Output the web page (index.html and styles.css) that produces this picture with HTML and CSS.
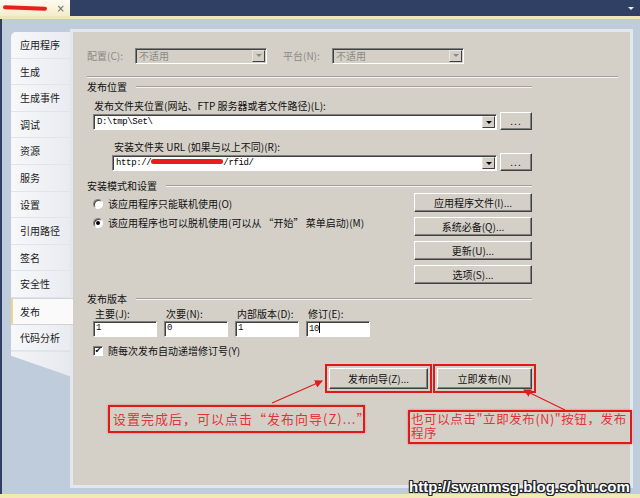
FILE: index.html
```html
<!DOCTYPE html>
<html lang="zh-CN">
<head>
    <meta charset="UTF-8">
    <title>发布</title>
    <link rel="stylesheet" href="styles.css">
</head>
<body>
    <div class="topbar">
        <div class="doctab">
            <span class="doctab-name"></span>
            <span class="doctab-close">×</span>
        </div>
        <span class="topbar-menu"></span>
    </div>
    <div class="goldline"></div>

    <div class="workspace">
        <div class="sidebar">
            <div class="side-tab first">应用程序</div>
            <div class="side-tab">生成</div>
            <div class="side-tab">生成事件</div>
            <div class="side-tab">调试</div>
            <div class="side-tab">资源</div>
            <div class="side-tab">服务</div>
            <div class="side-tab">设置</div>
            <div class="side-tab">引用路径</div>
            <div class="side-tab">签名</div>
            <div class="side-tab">安全性</div>
            <div class="side-tab active">发布</div>
            <div class="side-tab">代码分析</div>
            <div class="side-tail"></div>
        </div>

        <div class="frame">
            <div class="panel">
                <div class="cfg-row">
                    <span class="cfg-label">配置(C):</span>
                    <div class="combo combo-off cfg-combo">
                        <span class="combo-text">不适用</span>
                        <span class="combo-btn"><i class="arrow"></i></span>
                    </div>
                    <span class="cfg-label cfg-label-2">平台(N):</span>
                    <div class="combo combo-off cfg-combo">
                        <span class="combo-text">不适用</span>
                        <span class="combo-btn"><i class="arrow"></i></span>
                    </div>
                </div>
                <div class="rule rule-wide"></div>

                <div class="pub-body">
                    <div class="group-head">发布位置<i class="rule"></i></div>

                    <div class="field-label">发布文件夹位置(网站、FTP 服务器或者文件路径)(L):</div>
                    <div class="path-row">
                        <div class="combo path-combo">
                            <span class="combo-text mono">D:\tmp\Set\</span>
                            <span class="combo-btn"><i class="arrow"></i></span>
                        </div>
                        <button class="btn btn-browse">...</button>
                    </div>

                    <div class="field-label indent">安装文件夹 URL (如果与以上不同)(R):</div>
                    <div class="path-row indent-row">
                        <div class="combo path-combo">
                            <span class="combo-text mono">http://<span class="redact"></span>/rfid/</span>
                            <span class="combo-btn"><i class="arrow"></i></span>
                        </div>
                        <button class="btn btn-browse">...</button>
                    </div>

                    <div class="group-head group-gap">安装模式和设置<i class="rule"></i></div>
                    <div class="mode-row">
                        <div class="mode-options">
                            <div class="option"><span class="radio"></span>该应用程序只能联机使用(O)</div>
                            <div class="option option-2"><span class="radio radio-on"></span>该应用程序也可以脱机使用(可以从 “开始” 菜单启动)(M)</div>
                        </div>
                        <div class="mode-buttons">
                            <button class="btn btn-side">应用程序文件(I)...</button>
                            <button class="btn btn-side">系统必备(Q)...</button>
                            <button class="btn btn-side">更新(U)...</button>
                            <button class="btn btn-side">选项(S)...</button>
                        </div>
                    </div>

                    <div class="group-head group-gap">发布版本<i class="rule"></i></div>
                    <div class="version-row">
                        <div class="version-field">
                            <div class="version-label">主要(J):</div>
                            <div class="textbox">1</div>
                        </div>
                        <div class="version-field">
                            <div class="version-label">次要(N):</div>
                            <div class="textbox">0</div>
                        </div>
                        <div class="version-field">
                            <div class="version-label">内部版本(D):</div>
                            <div class="textbox">1</div>
                        </div>
                        <div class="version-field">
                            <div class="version-label">修订(E):</div>
                            <div class="textbox">10<span class="caret"></span></div>
                        </div>
                    </div>
                    <div class="option check-option"><span class="checkbox">✔</span>随每次发布自动递增修订号(Y)</div>

                    <div class="publish-row">
                        <button class="btn btn-publish btn-wizard marked">发布向导(Z)...</button>
                        <button class="btn btn-publish btn-now marked">立即发布(N)</button>
                    </div>
                </div>
            </div>
        </div>
    </div>
    <div class="bottomline"></div>

    <!-- annotations drawn over the screenshot -->
    <svg class="arrows" width="640" height="498" viewBox="0 0 640 498">
        <defs>
            <marker id="head" markerWidth="8" markerHeight="8" refX="7" refY="4" orient="auto" markerUnits="userSpaceOnUse">
                <path d="M0,0 L8,4 L0,8 Z" fill="#e01c1c"/>
            </marker>
        </defs>
        <line x1="272" y1="403" x2="322" y2="381" stroke="#e01c1c" stroke-width="1.2" marker-end="url(#head)"/>
        <line x1="565" y1="410" x2="524" y2="390" stroke="#e01c1c" stroke-width="1.2" marker-end="url(#head)"/>
    </svg>
    <div class="note note-1">设置完成后，可以点击“发布向导(Z)...”</div>
    <div class="note note-2">也可以点击"立即发布(N)"按钮，发布<br>程序</div>
    <div class="watermark">http://swanmsg.blog.sohu.com</div>
</body>
</html>
```

FILE: styles.css
```css
* {
    box-sizing: border-box;
}
body {
    margin: 0;
    width: 640px;
    height: 498px;
    overflow: hidden;
    position: relative;
    background-color: #bfccdc;
    font-family: "Noto Sans CJK SC", "Liberation Sans", sans-serif;
    font-size: 10px;
    color: #111;
}
.topbar {
    height: 16px;
    background-color: #2f4064;
    display: flex;
    justify-content: space-between;
    align-items: center;
}
.doctab {
    width: 70px;
    height: 16px;
    background: linear-gradient(#fdfbf1, #f4ecca);
    display: flex;
    align-items: center;
    padding: 0 5px 0 3px;
    justify-content: space-between;
}
.doctab-name {
    width: 44px;
    height: 4px;
    border-radius: 3px;
    background-color: #e8201c;
    transform: rotate(2deg);
}
.doctab-close {
    font-family: "DejaVu Sans", sans-serif;
    font-size: 10px;
    color: #666;
}
.topbar-menu {
    margin-right: 6px;
    border-left: 3px solid transparent;
    border-right: 3px solid transparent;
    border-top: 3px solid #e8ecf4;
}
.goldline {
    height: 3px;
    background-color: #efe5bb;
}
.workspace {
    height: 475px;
    display: flex;
    align-items: flex-start;
    padding: 10px 7px 6px 9px;
    border-left: 2px solid #2f4064;
}

/* left tabs */
.sidebar {
    width: 59px;
    margin-top: 3px;
    display: flex;
    flex-direction: column;
}
.side-tab {
    height: 26.6px;
    line-height: 26px;
    padding-left: 9px;
    background: linear-gradient(to right, #f7f8fa, #e8ebf0);
    border-bottom: 1px solid #e1e4ea;
    color: #1b1b1b;
    font-size: 10px;
}
.side-tab.first {
    border-top-left-radius: 5px;
}
.side-tab.active {
    background: #fafafa;
    border-left: 2px solid #efd58c;
    border-top: 1px solid #cfd4dc;
    border-bottom: 1px solid #cfd4dc;
    padding-left: 7px;
    margin-right: -3px;
    position: relative;
    z-index: 1;
}
.side-tail {
    height: 25px;
    background: linear-gradient(to right, #f2f4f7, #e6e9ee);
    clip-path: polygon(0 0, 100% 0, 100% 100%, 0 18%);
}

/* property page */
.frame {
    flex: 1;
    height: 459px;
    border: 3px solid #e3e8ef;
}
.panel {
    height: 100%;
    background-color: #d4d0c8;
    padding: 16px 12px 0 14px;
}
.cfg-row {
    height: 15px;
    display: flex;
    align-items: center;
}
.cfg-label {
    width: 48px;
    color: #8c8983;
    white-space: nowrap;
}
.cfg-label-2 {
    width: 49px;
    margin-left: 16px;
}
.cfg-combo {
    width: 132px;
    height: 16px;
    padding: 1px;
}
.rule {
    display: block;
    border-top: 1px solid #a3a098;
    border-bottom: 1px solid #f4f3ef;
}
.rule-wide {
    margin-top: 13px;
}
.pub-body {
    width: 445px;
}
.group-head {
    margin-top: 3px;
    height: 12px;
    line-height: 12px;
    display: flex;
    align-items: center;
    white-space: nowrap;
}
.group-head .rule {
    flex: 1;
    margin-left: 9px;
}
.group-gap {
    margin-top: 9px;
}

/* classic controls */
.combo {
    display: flex;
    height: 16px;
    background-color: #fff;
    border: 1px solid;
    border-color: #808080 #fff #fff #808080;
    box-shadow: inset 1px 1px #404040;
    padding: 1px 1px 1px 2px;
}
.combo-off {
    background-color: #d4d0c8;
    color: #8c8983;
}
.combo-text {
    flex: 1;
    line-height: 12px;
    padding-left: 1px;
    white-space: nowrap;
}
.mono {
    font-family: "Liberation Mono", monospace;
    font-size: 9px;
    letter-spacing: -0.35px;
    color: #000;
}
.redact {
    display: inline-block;
    width: 72px;
    height: 5px;
    border-radius: 3px;
    background-color: #ea1d1d;
    vertical-align: 1px;
}
.combo-btn {
    width: 13px;
    background-color: #d4d0c8;
    border: 1px solid;
    border-color: #e8e6e0 #404040 #404040 #e8e6e0;
    display: flex;
    align-items: center;
    justify-content: center;
}
.arrow {
    border-left: 3px solid transparent;
    border-right: 3px solid transparent;
    border-top: 3px solid #000;
}
.combo-off .arrow {
    border-top-color: #8c8983;
}
.btn {
    font-family: "Noto Sans CJK SC", sans-serif;
    font-size: 10px;
    color: #111;
    background-color: #d4d0c8;
    border: 1px solid;
    border-color: #fff #404040 #404040 #fff;
    box-shadow: inset -1px -1px #808080;
    padding: 0;
    line-height: 12px;
}
.field-label {
    margin-top: 7px;
    height: 12px;
    line-height: 12px;
    padding-left: 7px;
    white-space: nowrap;
}
.field-label.indent {
    margin-top: 11px;
    padding-left: 27px;
}
.path-row {
    display: flex;
    align-items: flex-end;
    padding-left: 6px;
}
.path-row.indent-row {
    padding-left: 25px;
}
.path-combo {
    flex: 1;
}
.btn-browse {
    width: 32px;
    height: 18px;
    margin-left: 3px;
    letter-spacing: 1px;
}

.mode-row {
    margin-top: 1px;
    display: flex;
    justify-content: space-between;
}
.mode-options {
    padding-left: 6px;
}
.option {
    height: 12px;
    line-height: 12px;
    display: flex;
    align-items: center;
    white-space: nowrap;
    margin-top: 5px;
}
.option-2 {
    margin-top: 7px;
}
.radio {
    width: 10px;
    height: 10px;
    margin-right: 5px;
    border-radius: 50%;
    background-color: #fff;
    border: 1px solid;
    border-color: #808080 #fff #fff #808080;
    box-shadow: inset 1px 1px #404040;
    display: flex;
    align-items: center;
    justify-content: center;
}
.radio-on::after {
    content: "";
    width: 4px;
    height: 4px;
    border-radius: 50%;
    background-color: #000;
}
.mode-buttons {
    width: 118px;
    display: flex;
    flex-direction: column;
    gap: 5px;
}
.btn-side {
    height: 19px;
}

.version-row {
    margin-top: 3px;
    padding-left: 6px;
    display: flex;
    gap: 7px;
}
.version-field {
    width: 64px;
}
.version-label {
    height: 12px;
    line-height: 12px;
    padding-left: 2px;
    white-space: nowrap;
}
.textbox {
    margin-top: 1px;
    height: 16px;
    background-color: #fff;
    border: 1px solid;
    border-color: #808080 #fff #fff #808080;
    box-shadow: inset 1px 1px #404040;
    padding-left: 2px;
    line-height: 13px;
    font-family: "Liberation Mono", monospace;
    font-size: 9px;
    letter-spacing: -0.35px;
}
.caret {
    display: inline-block;
    width: 1px;
    height: 11px;
    background-color: #000;
    vertical-align: -2px;
}
.check-option {
    margin-top: 8px;
    padding-left: 6px;
}
.checkbox {
    width: 10px;
    height: 10px;
    margin-right: 5px;
    background-color: #fff;
    border: 1px solid;
    border-color: #808080 #fff #fff #808080;
    box-shadow: inset 1px 1px #404040;
    font-family: "DejaVu Sans", sans-serif;
    font-size: 8px;
    line-height: 8px;
    text-align: center;
    color: #000;
}
.publish-row {
    margin-top: 11px;
    display: flex;
    justify-content: flex-end;
    gap: 9px;
}
.btn-publish {
    height: 21px;
}
.btn-wizard {
    width: 99px;
}
.btn-now {
    width: 95px;
}
.marked {
    outline: 2px solid #e01818;
    outline-offset: 2px;
}
.bottomline {
    height: 4px;
    background-color: #f3e8b6;
}

/* overlays */
.arrows {
    position: absolute;
    left: 0;
    top: 0;
}
.note {
    position: absolute;
    border: 2px solid #e01818;
    box-shadow: 0 0 2px rgba(230, 30, 30, 0.5);
    color: #e23434;
    white-space: nowrap;
}
.note-1 {
    left: 108px;
    top: 405px;
    width: 257px;
    height: 28px;
    line-height: 24px;
    padding-left: 3px;
    font-size: 13px;
    letter-spacing: 1px;
}
.note-2 {
    left: 408px;
    top: 410px;
    width: 224px;
    height: 34px;
    line-height: 14px;
    padding-left: 1px;
    font-size: 12.5px;
    letter-spacing: 0.6px;
}
.watermark {
    position: absolute;
    left: 409px;
    top: 478px;
    line-height: 18px;
    font-family: "Liberation Sans", sans-serif;
    font-weight: bold;
    font-size: 15px;
    color: #fff;
    text-shadow: 1px 0 #222, -1px 0 #222, 0 1px #222, 0 -1px #222, 1px 1px #222, -1px -1px #222, 1px -1px #222, -1px 1px #222;
}
```
